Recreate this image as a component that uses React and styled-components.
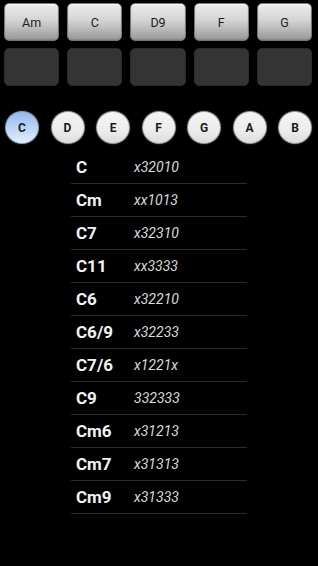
import React from "react";
import styled, { createGlobalStyle } from "styled-components";

const Global = createGlobalStyle`
  html, body { margin: 0; padding: 0; background: #000; }
  body { font-family: Roboto, "Noto Sans", "DejaVu Sans", sans-serif; width: 318px; height: 566px; overflow: hidden; }
`;

const Page = styled.div`
  width: 318px;
  height: 566px;
  background: #000;
  display: flex;
  flex-direction: column;
`;

const ButtonGrid = styled.div`
  display: grid;
  grid-template-columns: repeat(5, 1fr);
  column-gap: 8px;
  row-gap: 7px;
  padding: 3px 6px 0 4px;
`;

const ChordButton = styled.div`
  height: 38px;
  border-radius: 5px;
  box-sizing: border-box;
  display: flex;
  align-items: center;
  justify-content: center;
  font-size: 12.5px;
  color: #1c1c1c;
  background: linear-gradient(to bottom, #ececec 0%, #d4d4d4 45%, #989898 100%);
  border: 1px solid #777;
  box-shadow: inset 0 1px 0 #fafafa, inset 0 -1px 1px #888;
`;

const EmptySlot = styled.div`
  height: 38px;
  border-radius: 5px;
  box-sizing: border-box;
  background: #343434;
  border: 1px solid #2a2a2a;
  box-shadow: inset 0 0 1px #444;
`;

const RootRow = styled.div`
  display: flex;
  justify-content: space-between;
  padding: 0 6px 0 5px;
  margin-top: 25px;
`;

const RootCircle = styled.div`
  width: 34px;
  height: 33px;
  border-radius: 50%;
  box-sizing: border-box;
  display: flex;
  align-items: center;
  justify-content: center;
  font-size: 12px;
  font-weight: bold;
  color: #1a1a1a;
  border: 1px solid ${(p) => (p.$active ? "#8aa6cc" : "#9a9a9a")};
  background: ${(p) =>
    p.$active
      ? "linear-gradient(to bottom, #93b8ec 0%, #bcd3f3 50%, #e6effb 100%)"
      : "linear-gradient(to bottom, #f4f4f4 0%, #ececec 60%, #dcdcdc 100%)"};
  box-shadow: 0 0 2px rgba(255, 255, 255, 0.25);
`;

const List = styled.div`
  margin: 7px 0 0 71px;
  width: 176px;
`;

const Row = styled.div`
  height: 32px;
  border-bottom: 1px solid #2b2b2b;
  display: flex;
  align-items: center;
  padding-left: 5px;
`;

const Name = styled.span`
  width: 58px;
  font-size: 17px;
  font-weight: bold;
  color: #f2f2f2;
`;

const Fingering = styled.span`
  font-size: 14px;
  font-style: italic;
  color: #dcdcdc;
`;

const buttons = ["Am", "C", "D9", "F", "G"];
const roots = ["C", "D", "E", "F", "G", "A", "B"];
const chords = [
  ["C", "x32010"],
  ["Cm", "xx1013"],
  ["C7", "x32310"],
  ["C11", "xx3333"],
  ["C6", "x32210"],
  ["C6/9", "x32233"],
  ["C7/6", "x1221x"],
  ["C9", "332333"],
  ["Cm6", "x31213"],
  ["Cm7", "x31313"],
  ["Cm9", "x31333"],
];

export default function App() {
  return (
    <Page>
      <Global />
      <ButtonGrid>
        {buttons.map((b) => (
          <ChordButton key={b}>{b}</ChordButton>
        ))}
        {buttons.map((b) => (
          <EmptySlot key={"e" + b} />
        ))}
      </ButtonGrid>
      <RootRow>
        {roots.map((r) => (
          <RootCircle key={r} $active={r === "C"}>
            {r}
          </RootCircle>
        ))}
      </RootRow>
      <List>
        {chords.map(([n, f]) => (
          <Row key={n}>
            <Name>{n}</Name>
            <Fingering>{f}</Fingering>
          </Row>
        ))}
      </List>
    </Page>
  );
}
